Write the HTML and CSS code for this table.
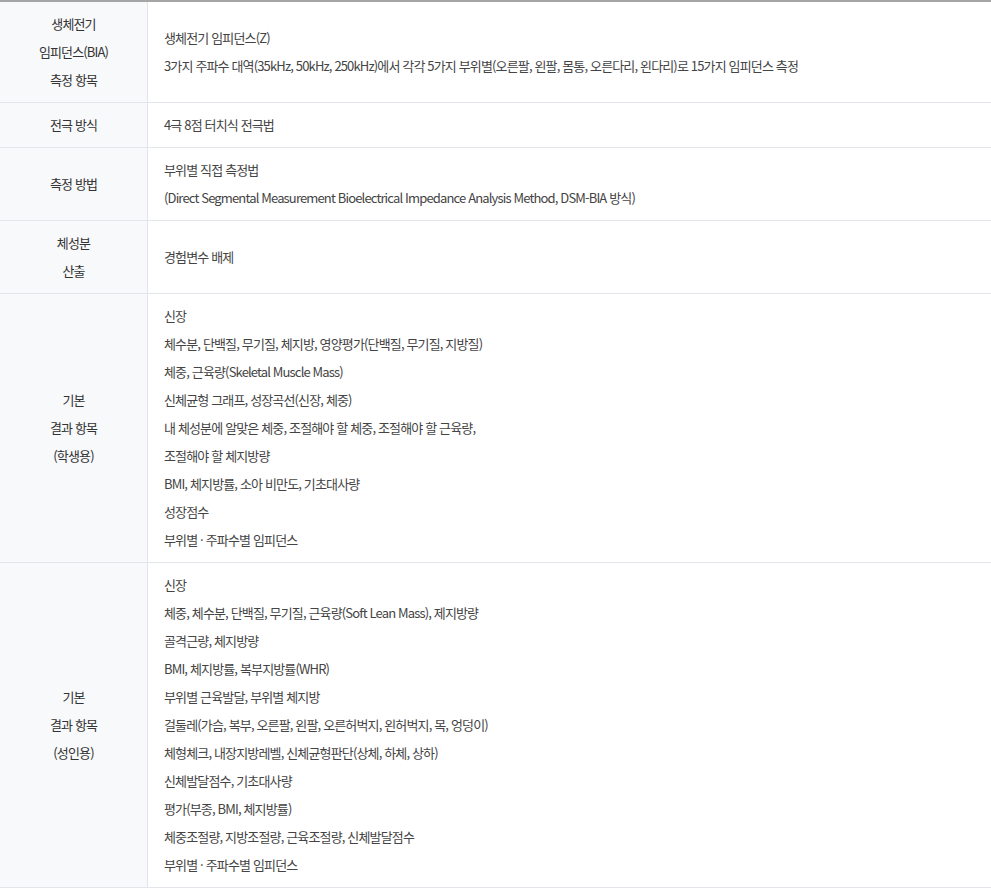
FILE: index.html
```html
<!DOCTYPE html>
<html lang="ko">
<head>
    <meta charset="UTF-8">
    <meta name="viewport" content="width=device-width, initial-scale=1.0">
    <title>제품 사양</title>
    <link rel="stylesheet" href="styles.css">
</head>
<body>
    <table class="spec">
        <tr>
            <th>생체전기<br>임피던스(BIA)<br>측정 항목</th>
            <td>생체전기 임피던스(Z)<br>3가지 주파수 대역(35kHz, 50kHz, 250kHz)에서 각각 5가지 부위별(오른팔, 왼팔, 몸통, 오른다리, 왼다리)로 15가지 임피던스 측정</td>
        </tr>
        <tr>
            <th>전극 방식</th>
            <td>4극 8점 터치식 전극법</td>
        </tr>
        <tr>
            <th>측정 방법</th>
            <td>부위별 직접 측정법<br>(Direct Segmental Measurement Bioelectrical Impedance Analysis Method, DSM-BIA 방식)</td>
        </tr>
        <tr>
            <th>체성분<br>산출</th>
            <td>경험변수 배제</td>
        </tr>
        <tr>
            <th>기본<br>결과 항목<br>(학생용)</th>
            <td>
                신장<br>
                체수분, 단백질, 무기질, 체지방, 영양평가(단백질, 무기질, 지방질)<br>
                체중, 근육량(Skeletal Muscle Mass)<br>
                신체균형 그래프, 성장곡선(신장, 체중)<br>
                내 체성분에 알맞은 체중, 조절해야 할 체중, 조절해야 할 근육량,<br>
                조절해야 할 체지방량<br>
                BMI, 체지방률, 소아 비만도, 기초대사량<br>
                성장점수<br>
                부위별 · 주파수별 임피던스
            </td>
        </tr>
        <tr>
            <th>기본<br>결과 항목<br>(성인용)</th>
            <td>
                신장<br>
                체중, 체수분, 단백질, 무기질, 근육량(Soft Lean Mass), 제지방량<br>
                골격근량, 체지방량<br>
                BMI, 체지방률, 복부지방률(WHR)<br>
                부위별 근육발달, 부위별 체지방<br>
                걸둘레(가슴, 복부, 오른팔, 왼팔, 오른허벅지, 왼허벅지, 목, 엉덩이)<br>
                체형체크, 내장지방레벨, 신체균형판단(상체, 하체, 상하)<br>
                신체발달점수, 기초대사량<br>
                평가(부종, BMI, 체지방률)<br>
                체중조절량, 지방조절량, 근육조절량, 신체발달점수<br>
                부위별 · 주파수별 임피던스
            </td>
        </tr>
    </table>
</body>
</html>
```

FILE: styles.css
```css
body {
    margin: 0;
    background-color: #fff;
    font-family: "Noto Sans CJK KR", "Noto Sans", sans-serif;
}

.spec {
    width: 100%;
    border-collapse: collapse;
    border-top: 2px solid #a5a5a5;
    font-size: 13px;
    line-height: 28px;
    letter-spacing: -0.85px;
}

.spec th,
.spec td {
    padding: 8px 16px;
    border-bottom: 1px solid #e2e6ea;
    vertical-align: middle;
}

.spec th {
    width: 115px;
    background-color: #f8f9fb;
    border-right: 1px solid #e2e6ea;
    color: #333;
    font-weight: normal;
    text-align: center;
}

.spec td {
    color: #444;
    text-align: left;
}
```
